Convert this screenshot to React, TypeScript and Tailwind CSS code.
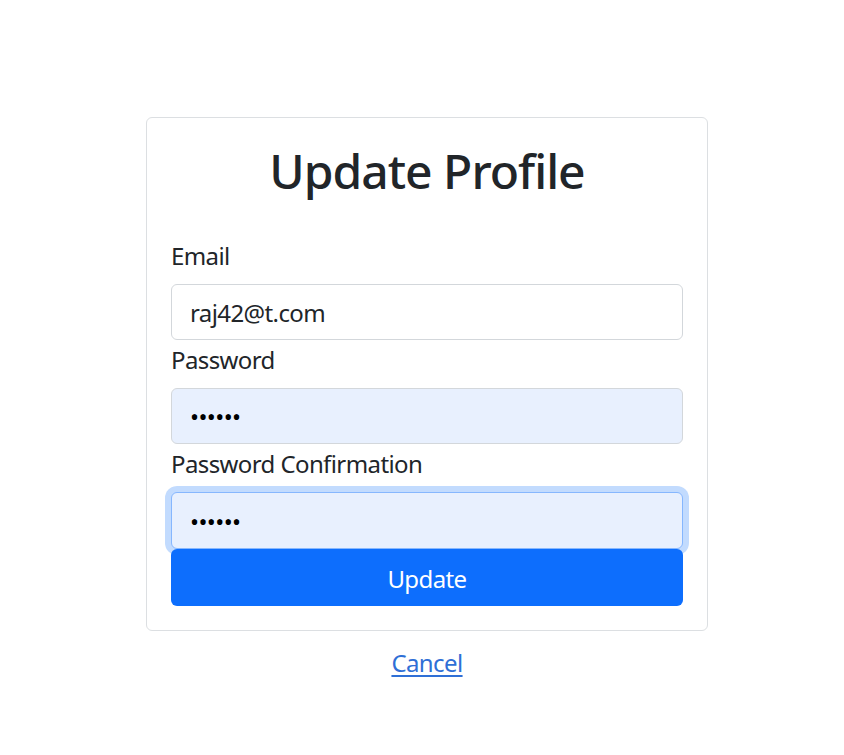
import { useState } from "react";

export default function App() {
  const [email, setEmail] = useState("raj42@t.com");
  const [password, setPassword] = useState("secret");
  const [confirm, setConfirm] = useState("secret");

  return (
    <div
      className="min-h-[755px] bg-white text-[#212529] pt-[117px] pl-[10px] flex flex-col items-center tracking-[-0.6px]"
      style={{ fontFamily: '"Noto Sans", "Open Sans", "Liberation Sans", sans-serif' }}
    >
      <div className="w-[562px] bg-white border border-[#dcdfe2] rounded-[6px] p-6">
        <h2 className="text-center text-[48px] leading-[57.6px] font-medium tracking-[-1px] mb-9">Update Profile</h2>
        <form onSubmit={(e) => e.preventDefault()}>
          <Campo etiqueta="Email">
            <input
              type="email"
              value={email}
              onChange={(e) => setEmail(e.target.value)}
              className="block w-full h-[56px] px-[18px] pt-[2px] text-[24px] leading-[36px] tracking-[-0.6px] bg-white border border-[#d3d7db] rounded-[6px] outline-none"
            />
          </Campo>
          <Campo etiqueta="Password">
            <input
              type="password"
              value={password}
              onChange={(e) => setPassword(e.target.value)}
              className="block w-full h-[56px] px-[18px] pt-[2px] text-[24px] leading-[36px] text-black bg-[#e8f0fe] border border-[#d3d7db] rounded-[6px] outline-none"
            />
          </Campo>
          <Campo etiqueta="Password Confirmation">
            <input
              type="password"
              value={confirm}
              onChange={(e) => setConfirm(e.target.value)}
              className="block w-full h-[57px] px-[18px] pt-[2px] text-[24px] leading-[36px] text-black bg-[#e8f0fe] border border-[#86b7fe] rounded-[6px] outline-none shadow-[0_0_0_6px_rgba(13,110,253,0.25)]"
            />
          </Campo>
          <button
            type="submit"
            className="block w-full h-[57px] pt-[3px] text-[24px] leading-[36px] text-white bg-[#0d6efd] rounded-[6px]"
          >
            Update
          </button>
        </form>
      </div>
      <a href="#" className="mt-[14px] text-[24px] leading-[36px] text-[#2f6fd6] underline underline-offset-[3px]">
        Cancel
      </a>
    </div>
  );
}

function Campo({ etiqueta, children }: { etiqueta: string; children: React.ReactNode }) {
  return (
    <div>
      <label className="block text-[24px] leading-[36px] pt-[2px] mb-[10px]">{etiqueta}</label>
      {children}
    </div>
  );
}
